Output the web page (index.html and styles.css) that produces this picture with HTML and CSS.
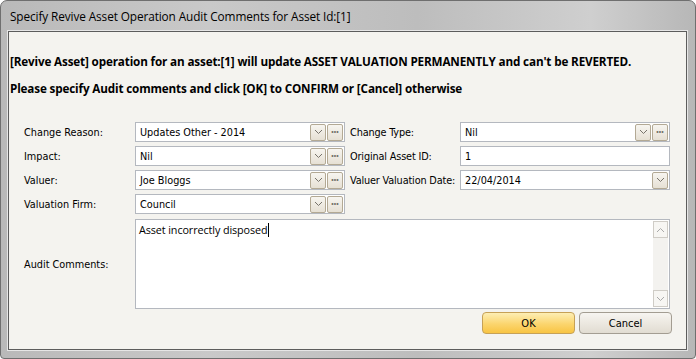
FILE: index.html
```html
<!DOCTYPE html>
<html lang="en">
<head>
    <meta charset="UTF-8">
    <title>Specify Revive Asset Operation Audit Comments</title>
    <link rel="stylesheet" href="styles.css">
</head>
<body>
    <div class="window">
        <div class="titlebar">Specify Revive Asset Operation Audit Comments for Asset Id:[1]</div>

        <div class="client">
            <div class="message">
                <p>[Revive Asset] operation for an asset:[1] will update ASSET VALUATION PERMANENTLY and can't be REVERTED.</p>
                <p>Please specify Audit comments and click [OK] to CONFIRM or [Cancel] otherwise</p>
            </div>

            <div class="form">
                <label>Change Reason:</label>
                <div class="field">
                    <span class="value">Updates Other - 2014</span>
                    <span class="btn-sm"><svg width="9" height="6" viewBox="0 0 9 6"><polyline points="1,1 4.5,4.5 8,1" fill="none" stroke="#77736b" stroke-width="1"/></svg></span>
                    <span class="btn-sm dots">&middot;&middot;&middot;</span>
                </div>
                <label class="right">Change Type:</label>
                <div class="field">
                    <span class="value">Nil</span>
                    <span class="btn-sm"><svg width="9" height="6" viewBox="0 0 9 6"><polyline points="1,1 4.5,4.5 8,1" fill="none" stroke="#77736b" stroke-width="1"/></svg></span>
                    <span class="btn-sm dots">&middot;&middot;&middot;</span>
                </div>

                <label>Impact:</label>
                <div class="field">
                    <span class="value">Nil</span>
                    <span class="btn-sm"><svg width="9" height="6" viewBox="0 0 9 6"><polyline points="1,1 4.5,4.5 8,1" fill="none" stroke="#77736b" stroke-width="1"/></svg></span>
                    <span class="btn-sm dots">&middot;&middot;&middot;</span>
                </div>
                <label class="right">Original Asset ID:</label>
                <div class="field">
                    <span class="value">1</span>
                </div>

                <label>Valuer:</label>
                <div class="field">
                    <span class="value">Joe Bloggs</span>
                    <span class="btn-sm"><svg width="9" height="6" viewBox="0 0 9 6"><polyline points="1,1 4.5,4.5 8,1" fill="none" stroke="#77736b" stroke-width="1"/></svg></span>
                    <span class="btn-sm dots">&middot;&middot;&middot;</span>
                </div>
                <label class="right">Valuer Valuation Date:</label>
                <div class="field">
                    <span class="value">22/04/2014</span>
                    <span class="btn-sm"><svg width="9" height="6" viewBox="0 0 9 6"><polyline points="1,1 4.5,4.5 8,1" fill="none" stroke="#77736b" stroke-width="1"/></svg></span>
                </div>

                <label>Valuation Firm:</label>
                <div class="field">
                    <span class="value">Council</span>
                    <span class="btn-sm"><svg width="9" height="6" viewBox="0 0 9 6"><polyline points="1,1 4.5,4.5 8,1" fill="none" stroke="#77736b" stroke-width="1"/></svg></span>
                    <span class="btn-sm dots">&middot;&middot;&middot;</span>
                </div>
                <div></div>
                <div></div>

                <label class="memo-label">Audit Comments:</label>
                <div class="memo">
                    <div class="memo-text">Asset incorrectly disposed<span class="caret"></span></div>
                    <div class="scrollbar">
                        <span class="arrow"><svg width="9" height="6" viewBox="0 0 9 6"><polyline points="1,5 4.5,1.5 8,5" fill="none" stroke="#a9a9a9" stroke-width="1"/></svg></span>
                        <span class="arrow"><svg width="9" height="6" viewBox="0 0 9 6"><polyline points="1,1 4.5,4.5 8,1" fill="none" stroke="#a9a9a9" stroke-width="1"/></svg></span>
                    </div>
                </div>
            </div>

            <div class="actions">
                <button class="ok">OK</button>
                <button class="cancel">Cancel</button>
            </div>
        </div>
    </div>
</body>
</html>
```

FILE: styles.css
```css
html, body {
    margin: 0;
    padding: 0;
    background: #ffffff;
}

.window {
    width: 696px;
    height: 359px;
    box-sizing: border-box;
    display: flex;
    flex-direction: column;
    background: linear-gradient(90deg, #b9b9b9 0%, #c9c9c9 30%, #bdbdbd 60%, #cfcfcf 85%, #b7b7b7 100%);
    border: 1px solid #6f6f6f;
    border-radius: 7px 7px 4px 4px;
    padding: 0 8px 8px 7px;
}

.titlebar {
    height: 30px;
    line-height: 30px;
    padding-left: 2px;
    font-family: "Open Sans", sans-serif;
    font-size: 11.8px;
    color: #000;
    letter-spacing: -0.1px;
}

.client {
    flex: 1;
    background: #f4f3ef;
    border: 1px solid #5c5c5c;
    box-shadow: 0 0 0 1px #e6e6e6;
    padding: 0 15px 0 15px;
    font-family: "DejaVu Sans Condensed", "DejaVu Sans", sans-serif;
    font-stretch: condensed;
    font-size: 10.8px;
    color: #000;
}

.message {
    margin-left: -14px;
    padding-top: 21px;
    font-family: "Open Sans", sans-serif;
    font-stretch: normal;
    font-weight: bold;
    font-size: 11.7px;
    letter-spacing: -0.15px;
}

.message p {
    margin: 0 0 11px 0;
    line-height: 16px;
}

.form {
    margin-top: 26px;
    display: grid;
    grid-template-columns: 111px 210px 115px 210px;
    row-gap: 4px;
    grid-auto-rows: 20px;
}

.form label {
    display: flex;
    align-items: center;
    white-space: nowrap;
}

.form label.right {
    padding-left: 5px;
    letter-spacing: -0.15px;
}

.field {
    display: flex;
    align-items: center;
    gap: 1px;
    background: #fff;
    border: 1px solid #b4b8bf;
    padding: 0 1px 0 4px;
}

.field .value {
    flex: 1;
}

.btn-sm {
    width: 14px;
    height: 15px;
    border: 1px solid #b3a994;
    border-radius: 2px;
    background: linear-gradient(#f7f5f0, #e6e0d4);
    display: flex;
    align-items: center;
    justify-content: center;
}

.btn-sm.dots {
    color: #77736b;
    font-size: 10px;
    font-weight: bold;
    letter-spacing: -1px;
    padding-right: 1px;
    box-sizing: content-box;
    width: 13px;
}

.memo-label {
    height: 90px;
    margin-top: 1px;
}

.memo {
    grid-column: 2 / 5;
    height: 90px;
    margin-top: 1px;
    background: #fff;
    border: 1px solid #b4b8bf;
    box-sizing: border-box;
    display: flex;
}

.memo-text {
    flex: 1;
    padding: 2px 3px;
    font-family: "Open Sans", sans-serif;
    font-stretch: normal;
    font-size: 10.8px;
    letter-spacing: -0.1px;
}

.caret {
    display: inline-block;
    width: 1px;
    height: 14px;
    background: #000;
    vertical-align: -3px;
}

.scrollbar {
    width: 15px;
    margin: 1px;
    background: #f3f2ef;
    display: flex;
    flex-direction: column;
    justify-content: space-between;
}

.arrow {
    height: 15px;
    border: 1px solid #cfccc6;
    background: #f7f6f3;
    display: flex;
    align-items: center;
    justify-content: center;
}

.actions {
    margin-top: 74px;
    display: flex;
    justify-content: flex-end;
    gap: 4px;
    margin-right: -1px;
}

.actions button {
    width: 93px;
    height: 22px;
    font-family: "DejaVu Sans Condensed", "DejaVu Sans", sans-serif;
    font-stretch: condensed;
    font-size: 11px;
    color: #000;
    border-radius: 4px;
    padding: 0;
}

.ok {
    background: linear-gradient(#fdeeb4, #fbd56e 55%, #f8c443);
    border: 1px solid #c6a157;
}

.cancel {
    background: linear-gradient(#f7f5f1, #ebe7df 55%, #e1dcd2);
    border: 1px solid #a39d92;
}
```
